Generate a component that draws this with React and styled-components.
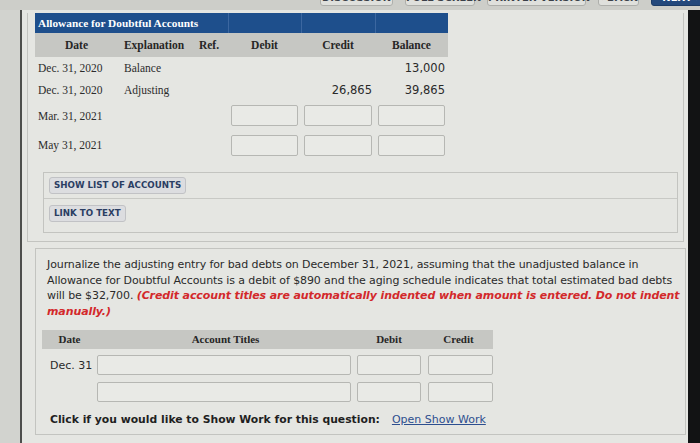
import React from "react";
import styled, { createGlobalStyle } from "styled-components";

const Global = createGlobalStyle`
  html, body { margin: 0; padding: 0; background: #d3d4d0; overflow: hidden; }
  #root { width: 700px; height: 443px; }
  * { box-sizing: border-box; }
`;

const SANS = `"DejaVu Sans", Verdana, sans-serif`;
const SERIF = `"Liberation Serif", "Times New Roman", serif`;
const ledgerCols = "83px 72px 38px 73px 74px 73px";
const journalCols = "55px 257px 70px 69px";

const Screen = styled.div`
  width: 700px;
  height: 443px;
  display: flex;
  flex-direction: column;
  overflow: hidden;
  background: #d3d4d0;
`;

const TopBar = styled.div`
  height: 10px;
  flex: none;
  display: flex;
  align-items: flex-end;
  gap: 12px;
  padding: 0 0 4px 320px;
  overflow: hidden;
  background: #cdcec9;
`;

const TopButton = styled.div`
  flex: none;
  width: ${(p) => p.$w}px;
  height: 16px;
  border: 1px solid ${(p) => (p.$primary ? "#1d3c66" : "#aeafab")};
  border-radius: 3px;
  background: ${(p) => (p.$primary ? "#24497c" : "#dfe0dc")};
  color: ${(p) => (p.$primary ? "#ffffff" : "#3a3f48")};
  font: 700 10px/14px ${SANS};
  text-align: center;
  white-space: nowrap;
`;

const Body = styled.div`
  flex: 1;
  min-height: 0;
  display: flex;
`;

const Gutter = styled.div`
  width: 20px;
  flex: none;
  background: #d2d3cf;
`;

const Panel = styled.div`
  flex: 1;
  min-width: 0;
  display: flex;
  flex-direction: column;
  padding-top: 3px;
  border-left: 2px solid #4d4e4c;
  background: #e5e6e2;
`;

const RightEdge = styled.div`
  width: 12px;
  flex: none;
  background: #121314;
`;

const SectionA = styled.div`
  margin: 0 4px 0 5px;
  padding: 0 0 8px 7px;
  border-left: 1px solid #c3c4c0;
  border-right: 1px solid #c3c4c0;
  border-bottom: 1px solid #c3c4c0;
`;

const Ledger = styled.div`
  width: 413px;
  display: flex;
  flex-direction: column;
`;

const LRow = styled.div`
  display: grid;
  grid-template-columns: ${ledgerCols};
  align-items: center;
  height: ${(p) => p.$h}px;
`;

const TitleRow = styled(LRow)`
  background: #1e4f8c;
  align-items: stretch;
`;

const TitleCell = styled.div`
  grid-column: span ${(p) => p.$span || 1};
  padding-left: 3px;
  color: #ffffff;
  font: 700 11.3px/20px ${SERIF};
  border-left: ${(p) => (p.$divide ? "1px solid #3c67a0" : "none")};
`;

const HeadRow = styled(LRow)`
  background: #c6c7c3;
`;

const HeadCell = styled.div`
  text-align: center;
  color: #262626;
  font: 700 11.5px/24px ${SERIF};
`;

const DateCell = styled.div`
  padding-left: 3px;
  color: #2c2c2c;
  font: 400 11.5px ${SERIF};
  white-space: nowrap;
`;

const TextCell = styled.div`
  padding-left: 6px;
  color: #2c2c2c;
  font: 400 11.5px ${SERIF};
`;

const NumCell = styled.div`
  padding-right: 3px;
  text-align: right;
  color: #2a2a2a;
  font: 400 11.5px ${SANS};
`;

const InputCell = styled.div`
  padding: 0 3px;
`;

const Field = styled.div`
  height: ${(p) => p.$h || 21}px;
  border: 1px solid #b6b7b3;
  border-radius: 2px;
  background: #e9eae6;
`;

const ButtonsBox = styled.div`
  margin: 12px 5px 0 8px;
  border: 1px solid #c3c4c0;
`;

const ButtonsRow = styled.div`
  display: flex;
  padding: ${(p) => (p.$last ? "6px 5px 10px" : "4px 5px")};
  border-bottom: ${(p) => (p.$last ? "none" : "1px solid #c8c9c5")};
`;

const SmallButton = styled.div`
  height: 17px;
  padding: 0 4px;
  border: 1px solid #c1c2c5;
  border-radius: 3px;
  background: #dcdde0;
  color: #2b3e63;
  font: 700 8.7px/15px ${SANS};
  white-space: nowrap;
`;

const QuestionBox = styled.div`
  margin: 6px 2px 0 13px;
  padding: 8px 0 8px 6px;
  border: 1px solid #c3c4c0;
`;

const Prompt = styled.p`
  margin: 0 0 0 5px;
  color: #2a2a2a;
  font: 400 11px/15.5px ${SANS};
  letter-spacing: -0.1px;
`;

const Red = styled.span`
  color: #d3292b;
  font-weight: 700;
  font-style: italic;
`;

const Journal = styled.div`
  margin-top: 11px;
  width: 451px;
  display: flex;
  flex-direction: column;
`;

const JRow = styled.div`
  display: grid;
  grid-template-columns: ${journalCols};
  align-items: center;
  padding-top: ${(p) => p.$pt || 0}px;
`;

const JHead = styled(JRow)`
  height: 19px;
  background: #c6c7c3;
`;

const JHeadCell = styled.div`
  text-align: center;
  color: #262626;
  font: 700 11px/19px ${SERIF};
`;

const JDate = styled.div`
  padding-left: 8px;
  color: #2a2a2a;
  font: 400 11px ${SANS};
  white-space: nowrap;
`;

const JField = styled(Field)`
  margin: ${(p) => p.$m};
`;

const ShowWork = styled.div`
  margin: 11px 0 0 8px;
  display: flex;
  align-items: baseline;
  line-height: 14px;
`;

const ShowLabel = styled.span`
  color: #1f1f1f;
  font: 700 10.8px ${SANS};
`;

const ShowLink = styled.span`
  margin-left: 12px;
  color: #2d4f8f;
  text-decoration: underline;
  font: 400 11px ${SANS};
`;

const ledgerRows = [
  { date: "Dec. 31, 2020", expl: "Balance", credit: "", balance: "13,000", h: 22 },
  { date: "Dec. 31, 2020", expl: "Adjusting", credit: "26,865", balance: "39,865", h: 22 },
  { date: "Mar. 31, 2021", input: true, h: 29 },
  { date: "May 31, 2021", input: true, h: 30 },
];

export default function App() {
  return (
    <>
      <Global />
      <Screen>
        <TopBar>
          <TopButton $w={73}>DISCUSSION</TopButton>
          <TopButton $w={70}>FULL SCREEN</TopButton>
          <TopButton $w={99}>PRINTER VERSION</TopButton>
          <TopButton $w={41}>‹ BACK</TopButton>
          <TopButton $w={60} $primary>NEXT ›</TopButton>
        </TopBar>
        <Body>
          <Gutter />
          <Panel>
            <SectionA>
              <Ledger>
                <TitleRow $h={20}>
                  <TitleCell $span={3}>Allowance for Doubtful Accounts</TitleCell>
                  <TitleCell $divide />
                  <TitleCell $divide />
                  <TitleCell $divide />
                </TitleRow>
                <HeadRow $h={24}>
                  <HeadCell>Date</HeadCell>
                  <HeadCell>Explanation</HeadCell>
                  <HeadCell>Ref.</HeadCell>
                  <HeadCell>Debit</HeadCell>
                  <HeadCell>Credit</HeadCell>
                  <HeadCell>Balance</HeadCell>
                </HeadRow>
                {ledgerRows.map((r, i) => (
                  <LRow key={i} $h={r.h}>
                    <DateCell>{r.date}</DateCell>
                    <TextCell>{r.expl || ""}</TextCell>
                    <div />
                    {r.input ? (
                      <>
                        <InputCell><Field /></InputCell>
                        <InputCell><Field /></InputCell>
                        <InputCell><Field /></InputCell>
                      </>
                    ) : (
                      <>
                        <div />
                        <NumCell>{r.credit}</NumCell>
                        <NumCell>{r.balance}</NumCell>
                      </>
                    )}
                  </LRow>
                ))}
              </Ledger>
              <ButtonsBox>
                <ButtonsRow>
                  <SmallButton>SHOW LIST OF ACCOUNTS</SmallButton>
                </ButtonsRow>
                <ButtonsRow $last>
                  <SmallButton>LINK TO TEXT</SmallButton>
                </ButtonsRow>
              </ButtonsBox>
            </SectionA>
            <QuestionBox>
              <Prompt>
                Journalize the adjusting entry for bad debts on December 31, 2021, assuming that the unadjusted balance in
                Allowance for Doubtful Accounts is a debit of $890 and the aging schedule indicates that total estimated bad debts
                will be $32,700.{" "}
                <Red>(Credit account titles are automatically indented when amount is entered. Do not indent manually.)</Red>
              </Prompt>
              <Journal>
                <JHead>
                  <JHeadCell>Date</JHeadCell>
                  <JHeadCell>Account Titles</JHeadCell>
                  <JHeadCell>Debit</JHeadCell>
                  <JHeadCell>Credit</JHeadCell>
                </JHead>
                <JRow $pt={6}>
                  <JDate>Dec. 31</JDate>
                  <JField $h={20} $m="0 3px 0 0" />
                  <JField $h={20} $m="0 3px" />
                  <JField $h={20} $m="0 0 0 4px" />
                </JRow>
                <JRow $pt={7}>
                  <div />
                  <JField $h={20} $m="0 3px 0 0" />
                  <JField $h={20} $m="0 3px" />
                  <JField $h={20} $m="0 0 0 4px" />
                </JRow>
              </Journal>
              <ShowWork>
                <ShowLabel>Click if you would like to Show Work for this question:</ShowLabel>
                <ShowLink>Open Show Work</ShowLink>
              </ShowWork>
            </QuestionBox>
          </Panel>
          <RightEdge />
        </Body>
      </Screen>
    </>
  );
}
